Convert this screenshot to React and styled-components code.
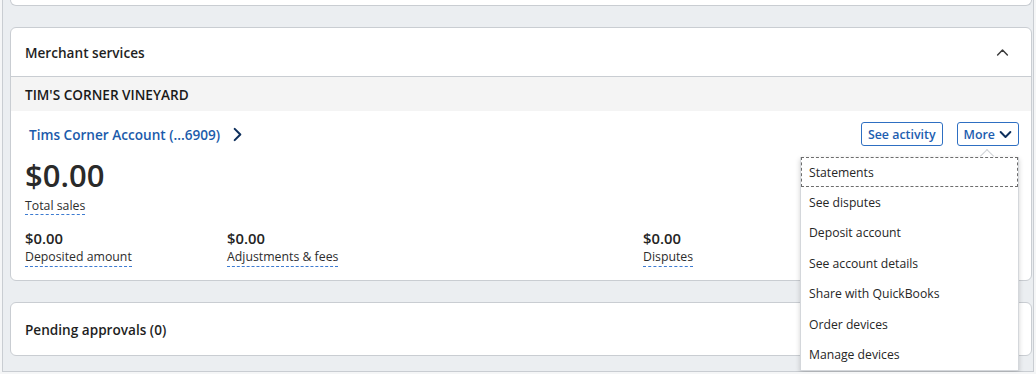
import React from 'react'
import styled, { createGlobalStyle } from 'styled-components'

const Global = createGlobalStyle`
  html, body {
    margin: 0;
    padding: 0;
    background: #f5f6f7;
    font-family: "Open Sans", "Liberation Sans", sans-serif;
    color: #242424;
  }
`;

const Frame = styled.div`
  box-sizing: border-box;
  margin-left: 2px;
  width: 1032px;
  height: 372px;
  background: #ebeef1;
  border: 1px solid #c9cdd2;
  border-top: none;
  padding: 0 1px 0 7px;
  display: flex;
  flex-direction: column;
`;

const Card = styled.section`
  background: #fff;
  border: 1px solid #c9cdd2;
  border-radius: 6px;
  margin-top: ${p => p.$gap || 0}px;
`;

const Stub = styled(Card)`
  height: 5px;
  border-top: none;
  border-radius: 0 0 6px 6px;
`;

const CardHeader = styled.div`
  height: ${p => p.$h || 48}px;
  display: flex;
  align-items: center;
  justify-content: space-between;
  padding: 0 22px 0 14px;
  border-bottom: ${p => (p.$divided ? '1px solid #c9cdd2' : 'none')};
`;

const Title = styled.h2`
  margin: 0;
  font-size: 13.6px;
  font-weight: 600;
  color: #1f1f1f;
`;

const Band = styled.div`
  height: 34px;
  display: flex;
  align-items: center;
  padding: 0 14px;
  background: #f4f4f4;
  font-size: 13.6px;
  font-weight: 600;
  color: #1a1a1a;
`;

const Body = styled.div`
  padding: 11px 12px 13px 14px;
`;

const TopRow = styled.div`
  display: flex;
  align-items: center;
  justify-content: space-between;
  height: 24px;
`;

const AccountLink = styled.a`
  display: flex;
  align-items: center;
  gap: 10px;
  padding-left: 4px;
  font-size: 13.6px;
  font-weight: 600;
  color: #1b5bab;
  text-decoration: none;
  svg { color: #0d2f5c; }
`;

const Actions = styled.div`
  display: flex;
  gap: 14px;
`;

const MenuWrap = styled.div`
  position: relative;
`;

const OutlineButton = styled.button`
  box-sizing: border-box;
  height: 24px;
  padding: 0 6px;
  display: flex;
  align-items: center;
  gap: 4px;
  background: #fff;
  border: 1px solid #2e6fc2;
  border-radius: 3px;
  font-family: inherit;
  font-size: 12.4px;
  font-weight: 600;
  color: #1d5eb0;
  svg { color: #0d2f5c; }
`;

const BigAmount = styled.div`
  margin-top: 11px;
  font-size: 31px;
  line-height: 36px;
  font-weight: 600;
  color: #2a2a2a;
`;

const Dotted = styled.span`
  font-size: 12.3px;
  line-height: 18px;
  color: #2d2d2d;
  border-bottom: 1px dashed #3d7bd1;
`;

const Stats = styled.div`
  margin-top: 14px;
  display: grid;
  grid-template-columns: 202px 416px 1fr;
`;

const Stat = styled.div`
  display: flex;
  flex-direction: column;
  align-items: flex-start;
`;

const Amount = styled.div`
  font-size: 14.8px;
  line-height: 19px;
  font-weight: 600;
  color: #242424;
`;

const Dropdown = styled.ul`
  position: absolute;
  top: 35px;
  right: 0;
  width: 217px;
  margin: 0;
  padding: 0;
  list-style: none;
  background: #fff;
  border: 1px solid #d4d7db;
  border-top: none;
  box-shadow: 0 2px 5px rgba(0, 0, 0, 0.18);
  z-index: 2;

  &::before {
    content: '';
    position: absolute;
    top: -6px;
    right: 26px;
    width: 9px;
    height: 9px;
    background: #fff;
    border-left: 1px solid #cfd2d6;
    border-top: 1px solid #cfd2d6;
    transform: rotate(45deg);
  }
`;

const MenuItem = styled.li`
  position: relative;
  box-sizing: border-box;
  height: 30.4px;
  display: flex;
  align-items: center;
  padding-left: 8px;
  font-size: 12.2px;
  color: #262626;
  outline: ${p => (p.$focused ? '1px dashed #6d6d6d' : 'none')};
  outline-offset: -1px;
  background: #fff;
`;

const Chevron = ({ dir = 'right', size = 14, w = 2 }) => {
  const d = {
    right: 'M5 2 L11 8 L5 14',
    down: 'M2 5 L8 11 L14 5',
    up: 'M2 11 L8 5 L14 11',
  }[dir];
  return (
    <svg width={size} height={size} viewBox="0 0 16 16" fill="none">
      <path d={d} stroke="currentColor" strokeWidth={w} strokeLinecap="round" strokeLinejoin="round" />
    </svg>
  );
};

const UpIcon = styled.span`
  display: flex;
  color: #3a3a3a;
`;

const items = [
  'Statements',
  'See disputes',
  'Deposit account',
  'See account details',
  'Share with QuickBooks',
  'Order devices',
  'Manage devices',
];

const stats = [
  { value: '$0.00', label: 'Deposited amount' },
  { value: '$0.00', label: 'Adjustments & fees' },
  { value: '$0.00', label: 'Disputes' },
];

const App = () => (
  <>
    <Global />
    <Frame>
      <Stub />
      <Card $gap={21}>
        <CardHeader $divided>
          <Title>Merchant services</Title>
          <UpIcon><Chevron dir="up" size={13} w={1.8} /></UpIcon>
        </CardHeader>
        <Band>TIM'S CORNER VINEYARD</Band>
        <Body>
          <TopRow>
            <AccountLink href="#">
              Tims Corner Account (...6909)
              <Chevron dir="right" size={15} w={2.2} />
            </AccountLink>
            <Actions>
              <OutlineButton>See activity</OutlineButton>
              <MenuWrap>
                <OutlineButton>
                  More
                  <Chevron dir="down" size={13} w={2.4} />
                </OutlineButton>
                <Dropdown>
                  {items.map((it, i) => (
                    <MenuItem key={it} $focused={i === 0}>{it}</MenuItem>
                  ))}
                </Dropdown>
              </MenuWrap>
            </Actions>
          </TopRow>
          <BigAmount>$0.00</BigAmount>
          <div><Dotted>Total sales</Dotted></div>
          <Stats>
            {stats.map(s => (
              <Stat key={s.label}>
                <Amount>{s.value}</Amount>
                <Dotted>{s.label}</Dotted>
              </Stat>
            ))}
          </Stats>
        </Body>
      </Card>
      <Card $gap={21}>
        <CardHeader $h={52}>
          <Title>Pending approvals (0)</Title>
        </CardHeader>
      </Card>
    </Frame>
  </>
);

export default App;
